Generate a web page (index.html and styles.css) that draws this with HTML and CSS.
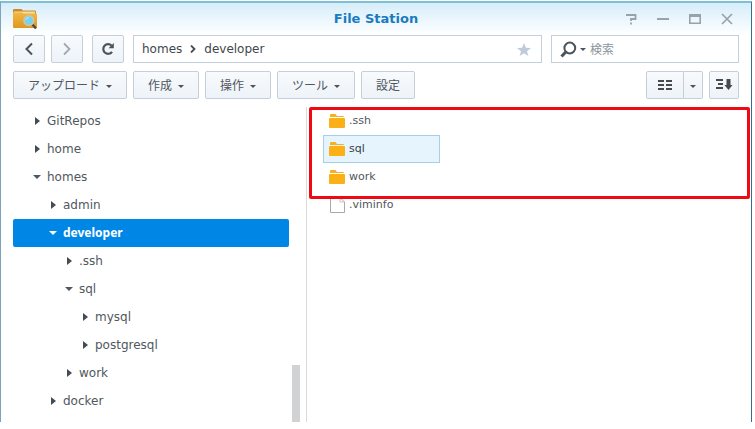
FILE: index.html
```html
<!DOCTYPE html>
<html lang="ja">
<head>
<meta charset="utf-8">
<title>File Station</title>
<link rel="stylesheet" href="styles.css">
</head>
<body>
<div class="window">
  <header class="titlebar">
    <svg class="app-icon" width="24" height="22" viewBox="0 0 24 22" aria-hidden="true">
      <defs><linearGradient id="folder" x1="0" y1="0" x2="0" y2="1"><stop offset="0" stop-color="#f3b842"/><stop offset="1" stop-color="#de981f"/></linearGradient></defs>
      <path d="M0 2Q0 1 1 1H8Q9 1 10 2.500H22Q23 2.500 23 3.500V8H0z" fill="#c98a2b"/>
      <path d="M1 3.500H22V7H1z" fill="#f3dca6"/>
      <path d="M0 4.500H9L10.500 5.500H23Q24 5.500 24 6.500V19Q24 20 23 20H1Q0 20 0 19z" fill="url(#folder)"/>
      <path d="M19 16L23 20.500" stroke="#4d4a45" stroke-width="2.400"/>
      <circle cx="15.800" cy="12.500" r="4.800" fill="#73d2ee" stroke="#cdc5ae" stroke-width="1.600"/>
      <path d="M13 12A3 3 0 0 1 16 9.500" fill="none" stroke="#b8ecfa"/>
    </svg>
    <h1 class="title">File Station</h1>
    <div class="window-controls">
      <button class="control" aria-label="ヘルプ"><svg width="12" height="12" viewBox="0 0 12 12"><path d="M1 2H10.500V6H6V8M6 9.500V11.500" fill="none" stroke="currentColor" stroke-width="1.800"/></svg></button>
      <button class="control" aria-label="最小化"><svg width="12" height="12" viewBox="0 0 12 12"><path d="M0 6H12" stroke="currentColor" stroke-width="2"/></svg></button>
      <button class="control" aria-label="最大化"><svg width="12" height="12" viewBox="0 0 12 12"><path d="M.8 1V10.200H11.200V1" fill="none" stroke="currentColor" stroke-width="1.600"/><path d="M0 1H12V4H0z" fill="currentColor"/></svg></button>
      <button class="control" aria-label="閉じる"><svg width="12" height="12" viewBox="0 0 12 12"><path d="M1 1L11 11M11 1L1 11" stroke="currentColor" stroke-width="1.700"/></svg></button>
    </div>
  </header>

  <div class="navbar">
    <div class="history">
      <button class="button square" aria-label="戻る"><svg width="10" height="14" viewBox="0 0 10 14"><path d="M8 1.500L2.500 7L8 12.500" fill="none" stroke="#4b535b" stroke-width="2"/></svg></button>
      <button class="button square" aria-label="進む"><svg width="10" height="14" viewBox="0 0 10 14"><path d="M2 1.500L7.500 7L2 12.500" fill="none" stroke="#a2a8ae" stroke-width="1.800"/></svg></button>
    </div>
    <button class="button square" aria-label="更新"><svg width="14" height="14" viewBox="0 0 14 14"><path d="M10.500 3.600A4.800 4.800 0 1 0 11 9.800" fill="none" stroke="#4b535b" stroke-width="2.200"/><path d="M7.500 6.200H12.800V1z" fill="#4b535b"/></svg></button>
    <nav class="path" aria-label="パス">
      <a href="#homes">homes</a>
      <svg width="6" height="8" viewBox="0 0 6 8" aria-hidden="true"><path d="M1 .5L4.500 4L1 7.500" fill="none" stroke="#454b50" stroke-width="1.800"/></svg>
      <a href="#developer">developer</a>
      <button class="star" aria-label="お気に入り"><svg width="16" height="15" viewBox="0 0 16 15"><path d="M8 1L9.900 5.700L15 6L11 9.200L12.400 14L8 11.300L3.600 14L5 9.200L1 6L6.100 5.700z" fill="#bfcbd8"/></svg></button>
    </nav>
    <div class="search">
      <button class="search-menu" aria-label="検索オプション"><svg width="26" height="17" viewBox="0 0 26 17"><circle cx="9.800" cy="7" r="5.400" fill="none" stroke="#4b535b" stroke-width="2"/><path d="M5.800 11L1.500 15.500" stroke="#4b535b" stroke-width="3"/><path d="M20 7H26L23 10z" fill="#4b535b"/></svg></button>
      <input type="search" placeholder="検索" aria-label="検索">
    </div>
  </div>

  <div class="toolbar">
    <button class="button">アップロード<span class="caret"></span></button>
    <button class="button">作成<span class="caret"></span></button>
    <button class="button">操作<span class="caret"></span></button>
    <button class="button">ツール<span class="caret"></span></button>
    <button class="button">設定</button>
    <div class="view-tools">
      <div class="split">
        <button class="button view" aria-label="表示"><svg width="14" height="10" viewBox="0 0 14 10"><path d="M0 1H6M8 1H14M0 5H6M8 5H14M0 9H6M8 9H14" stroke="#454b50" stroke-width="2"/></svg></button>
        <button class="button view-menu" aria-label="表示メニュー"><span class="caret"></span></button>
      </div>
      <button class="button sort" aria-label="並べ替え"><svg width="17" height="14" viewBox="0 0 17 14"><path d="M0 2H7M2 6H7M0 10H7" stroke="#454b50" stroke-width="2"/><path d="M10.500 1H14.500V7H16.500L12.500 12L8.500 7H10.500z" fill="#454b50"/></svg></button>
    </div>
  </div>

  <main class="content">
    <nav class="sidebar" aria-label="フォルダー">
      <ul class="tree">
        <li><a class="row" href="#gitrepos"><span class="arrow"></span>GitRepos</a></li>
        <li><a class="row" href="#home"><span class="arrow"></span>home</a></li>
        <li><a class="row" href="#homes"><span class="arrow open"></span>homes</a></li>
        <li><a class="row level-1" href="#admin"><span class="arrow"></span>admin</a></li>
        <li><a class="row level-1 current" href="#developer"><span class="arrow open"></span>developer</a></li>
        <li><a class="row level-2" href="#ssh"><span class="arrow"></span>.ssh</a></li>
        <li><a class="row level-2" href="#sql"><span class="arrow open"></span>sql</a></li>
        <li><a class="row level-3" href="#mysql"><span class="arrow"></span>mysql</a></li>
        <li><a class="row level-3" href="#postgresql"><span class="arrow"></span>postgresql</a></li>
        <li><a class="row level-2" href="#work"><span class="arrow"></span>work</a></li>
        <li><a class="row level-1" href="#docker"><span class="arrow"></span>docker</a></li>
      </ul>
      <div class="scrollbar"></div>
    </nav>
    <section class="files" aria-label="ファイル">
      <ul class="file-list">
        <li class="file"><svg class="folder" viewBox="0 0 16 14"><path d="M1 3V1Q1 0 2 0H6.500L8 2H14Q15 2 15 3z"/><path d="M0 5Q0 4 1 4H15Q16 4 16 5V13Q16 14 15 14H1Q0 14 0 13z"/></svg>.ssh</li>
        <li class="file selected"><svg class="folder" viewBox="0 0 16 14"><path d="M1 3V1Q1 0 2 0H6.500L8 2H14Q15 2 15 3z"/><path d="M0 5Q0 4 1 4H15Q16 4 16 5V13Q16 14 15 14H1Q0 14 0 13z"/></svg>sql</li>
        <li class="file"><svg class="folder" viewBox="0 0 16 14"><path d="M1 3V1Q1 0 2 0H6.500L8 2H14Q15 2 15 3z"/><path d="M0 5Q0 4 1 4H15Q16 4 16 5V13Q16 14 15 14H1Q0 14 0 13z"/></svg>work</li>
        <li class="file"><svg width="16" height="16" viewBox="0 0 16 16"><path d="M1.500 .5H11L15.500 5V15.500H1.500z" fill="#fff" stroke="#a9a9a9"/><path d="M11 .5V5H15.500" fill="none" stroke="#c4c4c4"/></svg>.viminfo</li>
      </ul>
      <div class="highlight"></div>
    </section>
  </main>
</div>
</body>
</html>
```
FILE: styles.css
```css
* { box-sizing: border-box; }

body {
  display: flex;
  height: 100vh;
  margin: 0;
  padding: 1px 3px 7px 0;
  overflow: hidden;
  background: #fff;
  color: #50575d;
  font: 12px/16px "DejaVu Sans", "Noto Sans CJK JP", sans-serif;
}

button {
  padding: 0;
  border: 0;
  background: none;
  color: inherit;
  font: inherit;
}

svg { display: block; flex: none; }
a { color: inherit; text-decoration: none; }
ul { margin: 0; padding: 0; list-style: none; }

.window {
  display: flex;
  flex: 1;
  flex-direction: column;
  min-width: 0;
  border: 1px solid #7fa3bd;
  border-top: 2px solid #7cc0d3;
  border-right-color: #356e87;
  border-bottom: 0;
  background: linear-gradient(#d6edfa, #fff 32px);
}

.titlebar {
  display: grid;
  grid-template-columns: 1fr auto 1fr;
  align-items: center;
  height: 32px;
  padding: 0 12px;
}

.title {
  margin: 0;
  color: #1a7bc0;
  font-size: 13px;
  font-weight: bold;
}

.window-controls {
  display: flex;
  justify-content: flex-end;
  gap: 20px;
  padding-right: 6px;
  color: #98a2aa;
}

.navbar, .toolbar {
  display: flex;
  gap: 9px;
  height: 28px;
  padding: 0 12px;
}

.toolbar { gap: 6px; margin-top: 8px; }
.history { display: flex; gap: 6px; }

.button {
  display: flex;
  align-items: center;
  justify-content: center;
  gap: 6px;
  padding: 0 14px;
  border: 1px solid #c3cfda;
  border-radius: 2px;
  background: linear-gradient(#f8fafc, #edf3f9);
  font-family: "Noto Sans CJK JP", sans-serif;
}

.square { width: 32px; padding: 0; }

.caret {
  border: 3px solid transparent;
  border-top-color: #4b535b;
  border-bottom: 0;
  margin-top: 3px;
}

.path {
  display: flex;
  flex: 1;
  align-items: center;
  gap: 8px;
  padding: 0 9px 0 8px;
  border: 1px solid #c3cfda;
  background: #fff;
  color: #3f464c;
}

.star { margin-left: auto; }

.search {
  display: flex;
  align-items: center;
  width: 188px;
  padding: 0 8px;
  border: 1px solid #c3cfda;
  background: #fff;
}

.search input {
  flex: 1;
  min-width: 0;
  padding: 0 4px;
  border: 0;
  outline: 0;
  background: none;
  font: 12px/16px "Noto Sans CJK JP", sans-serif;
}

.search input::placeholder { color: #8d959c; }

.view-tools { display: flex; gap: 6px; margin-left: auto; }
.split { display: flex; }
.view { width: 38px; padding: 0; border-radius: 2px 0 0 2px; }
.view-menu { width: 19px; padding: 0; border-left: 0; border-radius: 0 2px 2px 0; }
.sort { width: 30px; padding: 0; }

.content {
  display: flex;
  flex: 1;
  min-height: 0;
  margin-top: 8px;
}

.sidebar {
  display: flex;
  flex: 0 0 306px;
  padding-left: 12px;
  border-right: 1px solid #d8dade;
  overflow: hidden;
}

.tree { flex: 0 0 276px; }

.row {
  display: flex;
  align-items: center;
  gap: 6px;
  height: 28px;
  padding-left: 20px;
  border-radius: 2px;
}

.level-1 { padding-left: 36px; }
.level-2 { padding-left: 52px; }
.level-3 { padding-left: 68px; }

.current {
  background: #0086e5;
  color: #fff;
  font-family: "Noto Sans", sans-serif;
  font-weight: bold;
}

.arrow {
  display: flex;
  justify-content: center;
  width: 8px;
}

.arrow::before {
  border: 4px solid transparent;
  border-left: 5px solid #454b50;
  border-right: 0;
  content: "";
}

.arrow.open::before {
  border: 4px solid transparent;
  border-top-color: currentColor;
  border-bottom: 0;
}

.scrollbar {
  align-self: flex-end;
  width: 8px;
  height: 18%;
  margin-left: 3px;
  background: #d1d2d4;
}

.files {
  position: relative;
  flex: 1;
  padding-left: 16px;
}

.file {
  display: flex;
  align-items: center;
  gap: 4px;
  width: 117px;
  height: 28px;
  padding-left: 5px;
  border: 1px solid transparent;
  font-size: 11px;
}

.file.selected {
  border-color: #a6d0e7;
  background: #e6f4fd;
  color: #3b4248;
}

.folder { width: 16px; height: 14px; fill: #fbb017; }

.highlight {
  position: absolute;
  inset: 0 1px auto 2px;
  height: 92px;
  border: 3px solid #ee0a14;
  border-radius: 2px;
  pointer-events: none;
}
```
